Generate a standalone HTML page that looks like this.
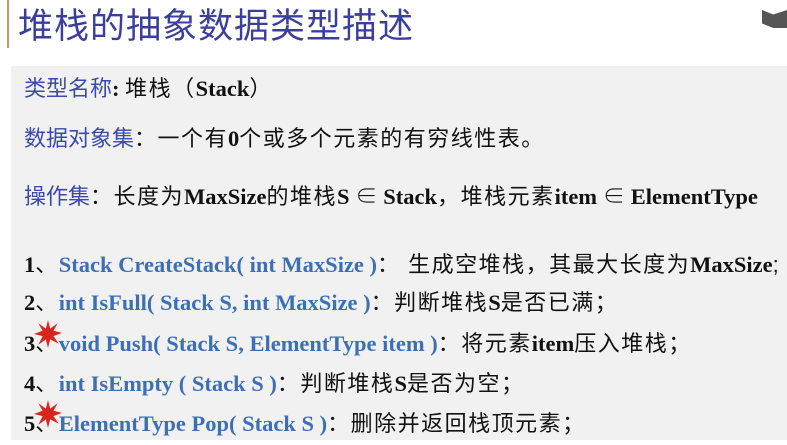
<!DOCTYPE html>
<html><head><meta charset="utf-8"><style>
body{margin:0;width:787px;height:445px;background:#fff;overflow:hidden;position:relative;font-family:"Liberation Serif","Noto Serif CJK SC",serif;}
.bar{position:absolute;left:7px;top:0;width:2px;height:48px;background:#c8955a;}
.title{position:absolute;left:18px;top:-2px;font-family:"Liberation Sans","Noto Sans CJK SC",sans-serif;font-size:35px;color:#3b3f9c;letter-spacing:1px;}
.panel{position:absolute;left:11px;top:66px;width:776px;height:374px;background:#f1f1f1;}
.l{position:absolute;left:24px;font-size:22.5px;color:#111;white-space:nowrap;font-weight:bold;}
.l .c{font-family:"Liberation Sans","Noto Sans CJK SC",sans-serif;font-weight:normal;font-size:22px;letter-spacing:1.5px;}
.lab{color:#3b4aa8;font-family:"Liberation Sans","Noto Sans CJK SC",sans-serif;font-weight:normal;font-size:22px;}
.b{color:#3d6fb5;}
.star{position:absolute;width:28px;height:28px;}
.icon{position:absolute;left:762px;top:10px;width:25px;height:18px;background:#555;clip-path:polygon(0 0,45% 25%,100% 0,100% 100%,45% 100%,0 75%);}
</style></head><body>
<div class="bar"></div>
<div class="title">堆栈的抽象数据类型描述</div>
<div class="icon"></div>
<div class="panel"></div>
<div class="l" style="top:71px"><span class="lab">类型名称</span>: <span class="c">堆栈（</span>Stack<span class="c">）</span></div>
<div class="l" style="top:121px"><span class="lab">数据对象集</span><span class="c">：一个有</span>0<span class="c">个或多个元素的有穷线性表。</span></div>
<div class="l" style="top:179px"><span class="lab">操作集</span><span class="c">：长度为</span>MaxSize<span class="c">的堆栈</span>S ∈ Stack<span class="c">，堆栈元素</span>item ∈ ElementType</div>
<div class="l" style="top:247px">1<span class="c">、</span><span class="b">Stack CreateStack( int MaxSize )</span><span class="c">： 生成空堆栈，其最大长度为</span>MaxSize<span class="c">;</span></div>
<div class="l" style="top:285px">2<span class="c">、</span><span class="b">int IsFull( Stack S, int MaxSize )</span><span class="c">：判断堆栈</span>S<span class="c">是否已满；</span></div>
<div class="l" style="top:326px">3<span class="c">、</span><span class="b">void Push( Stack S, ElementType item )</span><span class="c">：将元素</span>item<span class="c">压入堆栈；</span></div>
<div class="l" style="top:366px">4<span class="c">、</span><span class="b">int IsEmpty ( Stack S )</span><span class="c">：判断堆栈</span>S<span class="c">是否为空；</span></div>
<div class="l" style="top:406px">5<span class="c">、</span><span class="b">ElementType Pop( Stack S )</span><span class="c">：删除并返回栈顶元素；</span></div>
<svg class="star" style="left:34px;top:320px" viewBox="0 0 26 26"><polygon fill="#d8261c" points="13,0 15,8 22,3 18,10 26,12 18,15 23,22 15,18 13,26 11,18 4,23 8,15 0,13 8,10 4,3 11,8"/></svg>
<svg class="star" style="left:34px;top:400px" viewBox="0 0 26 26"><polygon fill="#d8261c" points="13,0 15,8 22,3 18,10 26,12 18,15 23,22 15,18 13,26 11,18 4,23 8,15 0,13 8,10 4,3 11,8"/></svg>
</body></html>
